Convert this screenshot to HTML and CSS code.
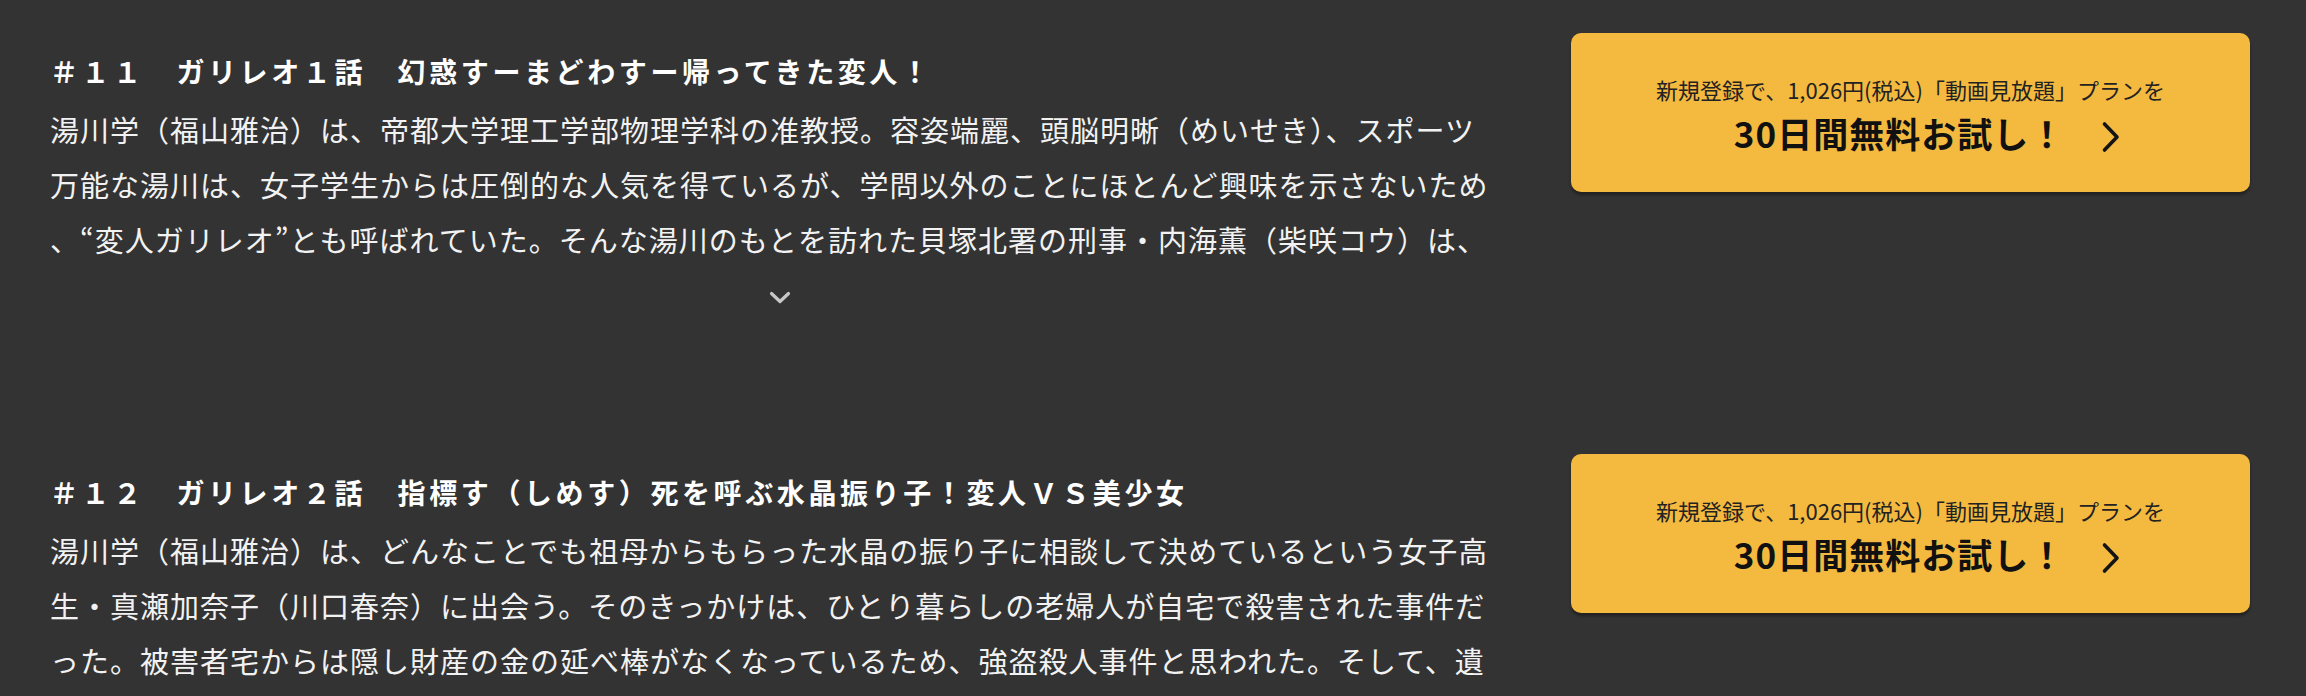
FILE: index.html
```html
<!DOCTYPE html>
<html lang="ja">
<head>
<meta charset="utf-8">
<title>ガリレオ エピソード</title>
<link rel="stylesheet" href="styles.css">
</head>
<body>
<main class="episodes">
  <section class="episode">
    <div class="ep-main">
      <h2 class="ep-title">＃１１　ガリレオ１話　幻惑すーまどわすー帰ってきた変人！</h2>
      <p class="ep-desc">湯川学（福山雅治）は、帝都大学理工学部物理学科の准教授。容姿端麗、頭脳明晰（めいせき）、スポーツ万能な湯川は、女子学生からは圧倒的な人気を得ているが、学問以外のことにほとんど興味を示さないため、“変人ガリレオ”とも呼ばれていた。そんな湯川のもとを訪れた貝塚北署の刑事・内海薫（柴咲コウ）は、</p>
      <div class="ep-more">
        <svg class="chev-down" width="22" height="13" viewBox="0 0 22 13"><polyline points="2.5,2.5 11,10.5 19.5,2.5" fill="none" stroke="#c8c8c8" stroke-width="3.2" stroke-linecap="round" stroke-linejoin="round"/></svg>
      </div>
    </div>
    <a class="cta" href="#">
      <span class="cta-sub">新規登録で、1,026円(税込)「動画見放題」プランを</span>
      <span class="cta-main"><span class="cta-text">30日間無料お試し！</span><svg class="chev-right" width="20" height="32" viewBox="0 0 20 32"><polyline points="3.5,3 16,16 3.5,29" fill="none" stroke="#141414" stroke-width="3.6" stroke-linecap="round" stroke-linejoin="round"/></svg></span>
    </a>
  </section>
  <section class="episode">
    <div class="ep-main">
      <h2 class="ep-title">＃１２　ガリレオ２話　指標す（しめす）死を呼ぶ水晶振り子！変人ＶＳ美少女</h2>
      <p class="ep-desc">湯川学（福山雅治）は、どんなことでも祖母からもらった水晶の振り子に相談して決めているという女子高生・真瀬加奈子（川口春奈）に出会う。そのきっかけは、ひとり暮らしの老婦人が自宅で殺害された事件だった。被害者宅からは隠し財産の金の延べ棒がなくなっているため、強盗殺人事件と思われた。そして、遺</p>
      <div class="ep-more">
        <svg class="chev-down" width="22" height="13" viewBox="0 0 22 13"><polyline points="2.5,2.5 11,10.5 19.5,2.5" fill="none" stroke="#c8c8c8" stroke-width="3.2" stroke-linecap="round" stroke-linejoin="round"/></svg>
      </div>
    </div>
    <a class="cta" href="#">
      <span class="cta-sub">新規登録で、1,026円(税込)「動画見放題」プランを</span>
      <span class="cta-main"><span class="cta-text">30日間無料お試し！</span><svg class="chev-right" width="20" height="32" viewBox="0 0 20 32"><polyline points="3.5,3 16,16 3.5,29" fill="none" stroke="#141414" stroke-width="3.6" stroke-linecap="round" stroke-linejoin="round"/></svg></span>
    </a>
  </section>
</main>
</body>
</html>
```
FILE: styles.css
```css
html, body {
  margin: 0;
  padding: 0;
  background: #333333;
}

body {
  font-family: "Noto Sans CJK JP", "Noto Sans", sans-serif;
  color: #ffffff;
  overflow: hidden;
}

.episodes {
  display: flex;
  flex-direction: column;
  gap: 150px;
  padding: 33px 56px 0 50px;
}

.episode {
  display: flex;
  align-items: flex-start;
  gap: 62px;
}

.ep-main {
  flex: 1;
  min-width: 0;
  padding-top: 18px;
}

.ep-title {
  margin: 0;
  font-size: 28px;
  font-weight: 700;
  letter-spacing: 3.6px;
  line-height: 40px;
  color: #ffffff;
  white-space: nowrap;
}

.ep-desc {
  margin: 11px 0 0;
  max-width: 1442px;
  font-size: 29px;
  font-weight: 400;
  letter-spacing: 1px;
  line-height: 55px;
  color: #f2f2f2;
  line-break: anywhere;
}

.ep-more {
  display: flex;
  justify-content: center;
  margin-top: 24px;
}

.chev-down {
  display: block;
}

.cta {
  flex: 0 0 679px;
  height: 159px;
  box-sizing: border-box;
  background: #f4b93f;
  border-radius: 10px;
  box-shadow: 0 3px 3px rgba(0, 0, 0, 0.35);
  display: flex;
  flex-direction: column;
  align-items: center;
  justify-content: center;
  text-decoration: none;
  color: #1a1a1a;
  padding-top: 3px;
}

.cta-sub {
  font-size: 22px;
  line-height: 30px;
  font-weight: 400;
  color: #222222;
}

.cta-main {
  display: flex;
  align-items: center;
  margin-top: 7px;
  padding-left: 34px;
}

.cta-text {
  font-size: 35px;
  font-weight: 700;
  letter-spacing: 1px;
  line-height: 44px;
  color: #111111;
}

.chev-right {
  display: block;
  margin-left: 36px;
  margin-top: 8px;
}
```
